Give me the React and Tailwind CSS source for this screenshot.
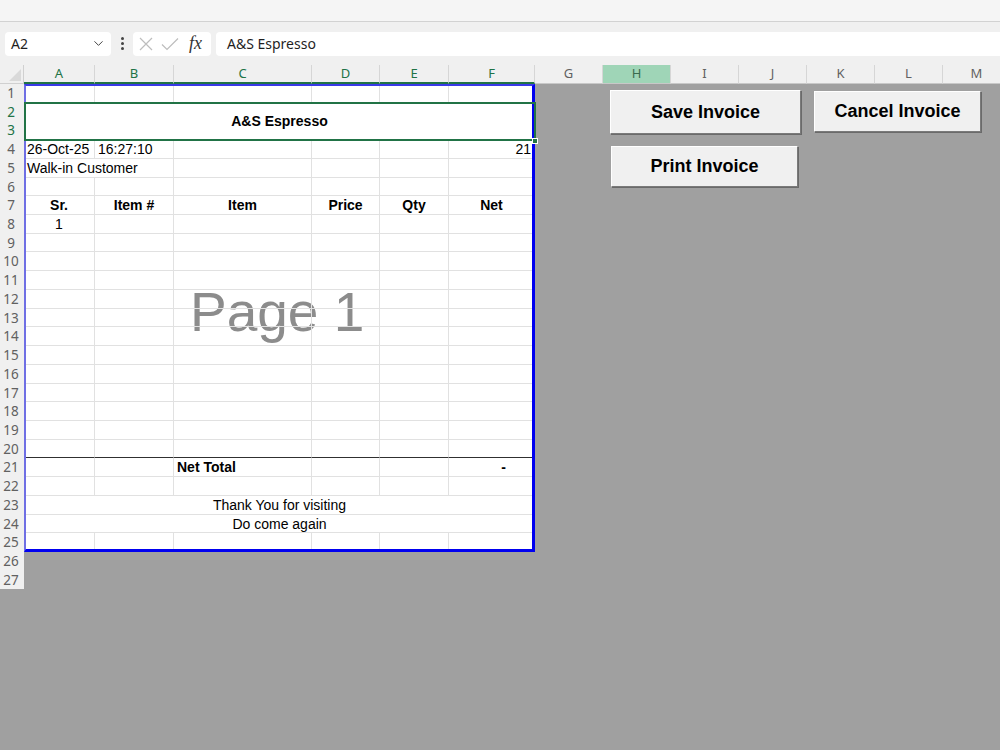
import { ChevronDown } from 'lucide-react';

const COLS = [
  { key: 'A', w: 'w-[71px]' },
  { key: 'B', w: 'w-[79px]' },
  { key: 'C', w: 'w-[138px]' },
  { key: 'D', w: 'w-[68px]' },
  { key: 'E', w: 'w-[69px]' },
  { key: 'F', w: 'w-[86px]' },
];
const MORE_COLS = ['G', 'H', 'I', 'J', 'K', 'L', 'M'];

// row heights in px (rows 1..27)
const ROW_H = [19, 18, 19, 19, 19, 18, 19, 19, 18, 19, 19, 19, 18, 19, 19, 19, 18, 19, 19, 18, 19, 19, 19, 18, 19, 19, 18];
const hClass = (h) => (h === 19 ? 'h-[19px]' : 'h-[18px]');

const cellFont = "font-['Liberation_Sans',Arial,sans-serif] text-[14px] text-black";
const uiFont = "font-['Noto_Sans','Open_Sans',sans-serif]";

const HEADERS = ['Sr.', 'Item #', 'Item', 'Price', 'Qty', 'Net'];

function Cell({ w, children, className = '', line = 'border-b-[#e1e1e1]' }) {
  return (
    <div className={`${w} h-full shrink-0 border-r border-b border-r-[#e1e1e1] ${line} flex items-center overflow-visible whitespace-nowrap pt-[1px] ${className}`}>
      {children}
    </div>
  );
}

function PlainRow({ h, cells = {}, line }) {
  return (
    <div className={`flex ${hClass(h)}`}>
      {COLS.map((c) => {
        const cell = cells[c.key];
        return (
          <Cell key={c.key} w={c.w} line={line} className={cell?.cls || ''}>
            {cell?.text}
          </Cell>
        );
      })}
    </div>
  );
}

function FullRow({ h, children, className = '' }) {
  return (
    <div className={`flex ${hClass(h)} w-[511px] items-center justify-center border-b border-[#e1e1e1] pt-[1px] ${className}`}>
      {children}
    </div>
  );
}

function SheetRows() {
  const rows = [];
  for (let r = 1; r <= 25; r++) {
    const h = ROW_H[r - 1];
    if (r === 2) {
      rows.push(
        <div key={r} className="flex h-[37px] w-[511px] items-center justify-center border-b border-[#e1e1e1] pt-[1px] font-bold">
          A&amp;S Espresso
        </div>
      );
      continue;
    }
    if (r === 3) continue;
    if (r === 4) {
      rows.push(
        <PlainRow
          key={r}
          h={h}
          cells={{
            A: { text: '26-Oct-25', cls: 'pl-[3px]' },
            B: { text: '16:27:10', cls: 'pl-[3px]' },
            F: { text: '21', cls: 'justify-end pr-[3px]' },
          }}
        />
      );
      continue;
    }
    if (r === 5) {
      rows.push(
        <div key={r} className={`flex ${hClass(h)}`}>
          <div className="w-[150px] h-full shrink-0 border-r border-b border-[#e1e1e1] flex items-center pl-[3px] pt-[1px]">Walk-in Customer</div>
          {COLS.slice(2).map((c) => (
            <Cell key={c.key} w={c.w} />
          ))}
        </div>
      );
      continue;
    }
    if (r === 7) {
      const cells = {};
      COLS.forEach((c, i) => {
        cells[c.key] = { text: HEADERS[i], cls: 'justify-center font-bold' };
      });
      rows.push(<PlainRow key={r} h={h} cells={cells} />);
      continue;
    }
    if (r === 8) {
      rows.push(<PlainRow key={r} h={h} cells={{ A: { text: '1', cls: 'justify-center' } }} />);
      continue;
    }
    if (r === 20) {
      rows.push(<PlainRow key={r} h={h} line="border-b-[#303030]" />);
      continue;
    }
    if (r === 21) {
      rows.push(
        <PlainRow
          key={r}
          h={h}
          cells={{
            C: { text: 'Net Total', cls: 'pl-[3px] font-bold' },
            F: { text: '-', cls: 'justify-end pr-[28px] font-bold' },
          }}
        />
      );
      continue;
    }
    if (r === 23) {
      rows.push(<FullRow key={r} h={h}>Thank You for visiting</FullRow>);
      continue;
    }
    if (r === 24) {
      rows.push(<FullRow key={r} h={h}>Do come again</FullRow>);
      continue;
    }
    rows.push(<PlainRow key={r} h={h} />);
  }
  return rows;
}

function SheetButton({ className, children }) {
  return (
    <button
      className={`absolute flex items-center justify-center bg-[#f0f0f0] border border-t-white border-l-white border-r-[#7a7a7a] border-b-[#7a7a7a] shadow-[1px_1px_0_#6a6a6a] font-['Liberation_Sans',Arial,sans-serif] text-[18px] font-bold text-black ${className}`}
    >
      {children}
    </button>
  );
}

export default function App() {
  return (
    <div className="relative h-[750px] w-[1000px] overflow-hidden bg-[#a0a0a0]">
      {/* ribbon edge */}
      <div className="h-[22px] bg-[#f5f5f5] border-b border-[#d2d2d2] shadow-[0_1px_2px_rgba(0,0,0,0.12)]" />

      {/* formula bar */}
      <div className={`flex h-[43px] items-center bg-[#f0f0f0] pl-[5px] ${uiFont}`}>
        <div className="flex h-[24px] w-[106px] items-center justify-between rounded-[4px] bg-white pl-[6px] pr-[5px] text-[14px] text-[#1f1f1f]">
          <span>A2</span>
          <ChevronDown size={15} strokeWidth={1.6} className="text-[#444]" />
        </div>
        <div className="ml-[10px] mr-[9px] flex flex-col gap-[2px]">
          <div className="h-[3px] w-[3px] rounded-full bg-[#444]" />
          <div className="h-[3px] w-[3px] rounded-full bg-[#444]" />
          <div className="h-[3px] w-[3px] rounded-full bg-[#444]" />
        </div>
        <div className="flex h-[24px] w-[78px] items-center rounded-[4px] bg-white pl-[6px]">
          <svg width="14" height="14" viewBox="0 0 14 14" className="shrink-0">
            <path d="M1 1 L13 13 M13 1 L1 13" stroke="#bdbdbd" strokeWidth="1.2" fill="none" />
          </svg>
          <svg width="18" height="14" viewBox="0 0 18 14" className="ml-[8px] shrink-0">
            <path d="M1 7.5 L6 12.5 L17 1.5" stroke="#bdbdbd" strokeWidth="1.2" fill="none" />
          </svg>
          <span className="ml-[10px] font-['Liberation_Serif',serif] text-[18px] italic text-[#333]">fx</span>
        </div>
        <div className="ml-[5px] flex h-[24px] flex-1 items-center rounded-l-[4px] bg-white pl-[11px] text-[14px] text-[#1f1f1f]">
          A&amp;S Espresso
        </div>
      </div>

      {/* column headers */}
      <div className={`flex h-[19px] bg-[#f0f0f0] text-[13px] ${uiFont}`}>
        <div className="relative h-full w-[24px] shrink-0 border-r border-b border-[#d0d0d0]">
          <svg className="absolute bottom-[2px] right-[2px]" width="12" height="12" viewBox="0 0 12 12">
            <polygon points="12,0 12,12 0,12" fill="#d9d9d9" />
          </svg>
        </div>
        {COLS.map((c) => (
          <div
            key={c.key}
            className={`${c.w} flex h-full shrink-0 items-center justify-center border-r border-r-[#d6d6d6] border-b-2 border-b-[#217346] text-[#217346]`}
          >
            {c.key}
          </div>
        ))}
        {MORE_COLS.map((k) => (
          <div
            key={k}
            className={`flex h-full w-[68px] shrink-0 items-center justify-center border-r border-b border-r-[#d6d6d6] border-b-[#c8c8c8] ${
              k === 'H' ? 'bg-[#9fd5b7] text-[#3b6b4f]' : 'text-[#616161]'
            }`}
          >
            {k}
          </div>
        ))}
      </div>

      {/* body */}
      <div className="flex">
        <div className={`flex w-[24px] shrink-0 flex-col text-[13.5px] ${uiFont}`}>
          {ROW_H.map((h, i) => (
            <div
              key={i}
              className={`${hClass(h)} flex items-center justify-center bg-[#f0f0f0] pr-[2px] ${
                i === 1 || i === 2 ? 'text-[#217346]' : 'text-[#616161]'
              }`}
            >
              {i + 1}
            </div>
          ))}
        </div>

        <div className={`relative h-[468px] w-[511px] bg-white ${cellFont}`}>
          {/* page watermark */}
          <div className="pointer-events-none absolute left-[166px] top-[201px] z-0 font-['Liberation_Sans',Arial,sans-serif] text-[55px] leading-none text-[#8c8c8c]">
            Page 1
          </div>

          <div className="relative z-10">
            <SheetRows />
          </div>

          {/* print area border */}
          <div className="pointer-events-none absolute inset-0 z-20 border-l-2 border-t-2 border-r-[3px] border-b-[3px] border-l-[#6f6fe4] border-t-[#3a3ae8] border-r-[#0000f0] border-b-[#0000f0]" />

          {/* selection A2:F3 */}
          <div className="pointer-events-none absolute left-0 top-[18px] z-30 h-[39px] w-[512px] border-2 border-[#217346]" />
          <div className="absolute left-[508px] top-[54px] z-40 h-[6px] w-[6px] border border-white bg-[#217346]" />
        </div>
      </div>

      <SheetButton className="left-[610px] top-[90px] h-[44px] w-[191px]">Save Invoice</SheetButton>
      <SheetButton className="left-[814px] top-[91px] h-[41px] w-[167px]">Cancel Invoice</SheetButton>
      <SheetButton className="left-[611px] top-[146px] h-[41px] w-[187px]">Print Invoice</SheetButton>
    </div>
  );
}
